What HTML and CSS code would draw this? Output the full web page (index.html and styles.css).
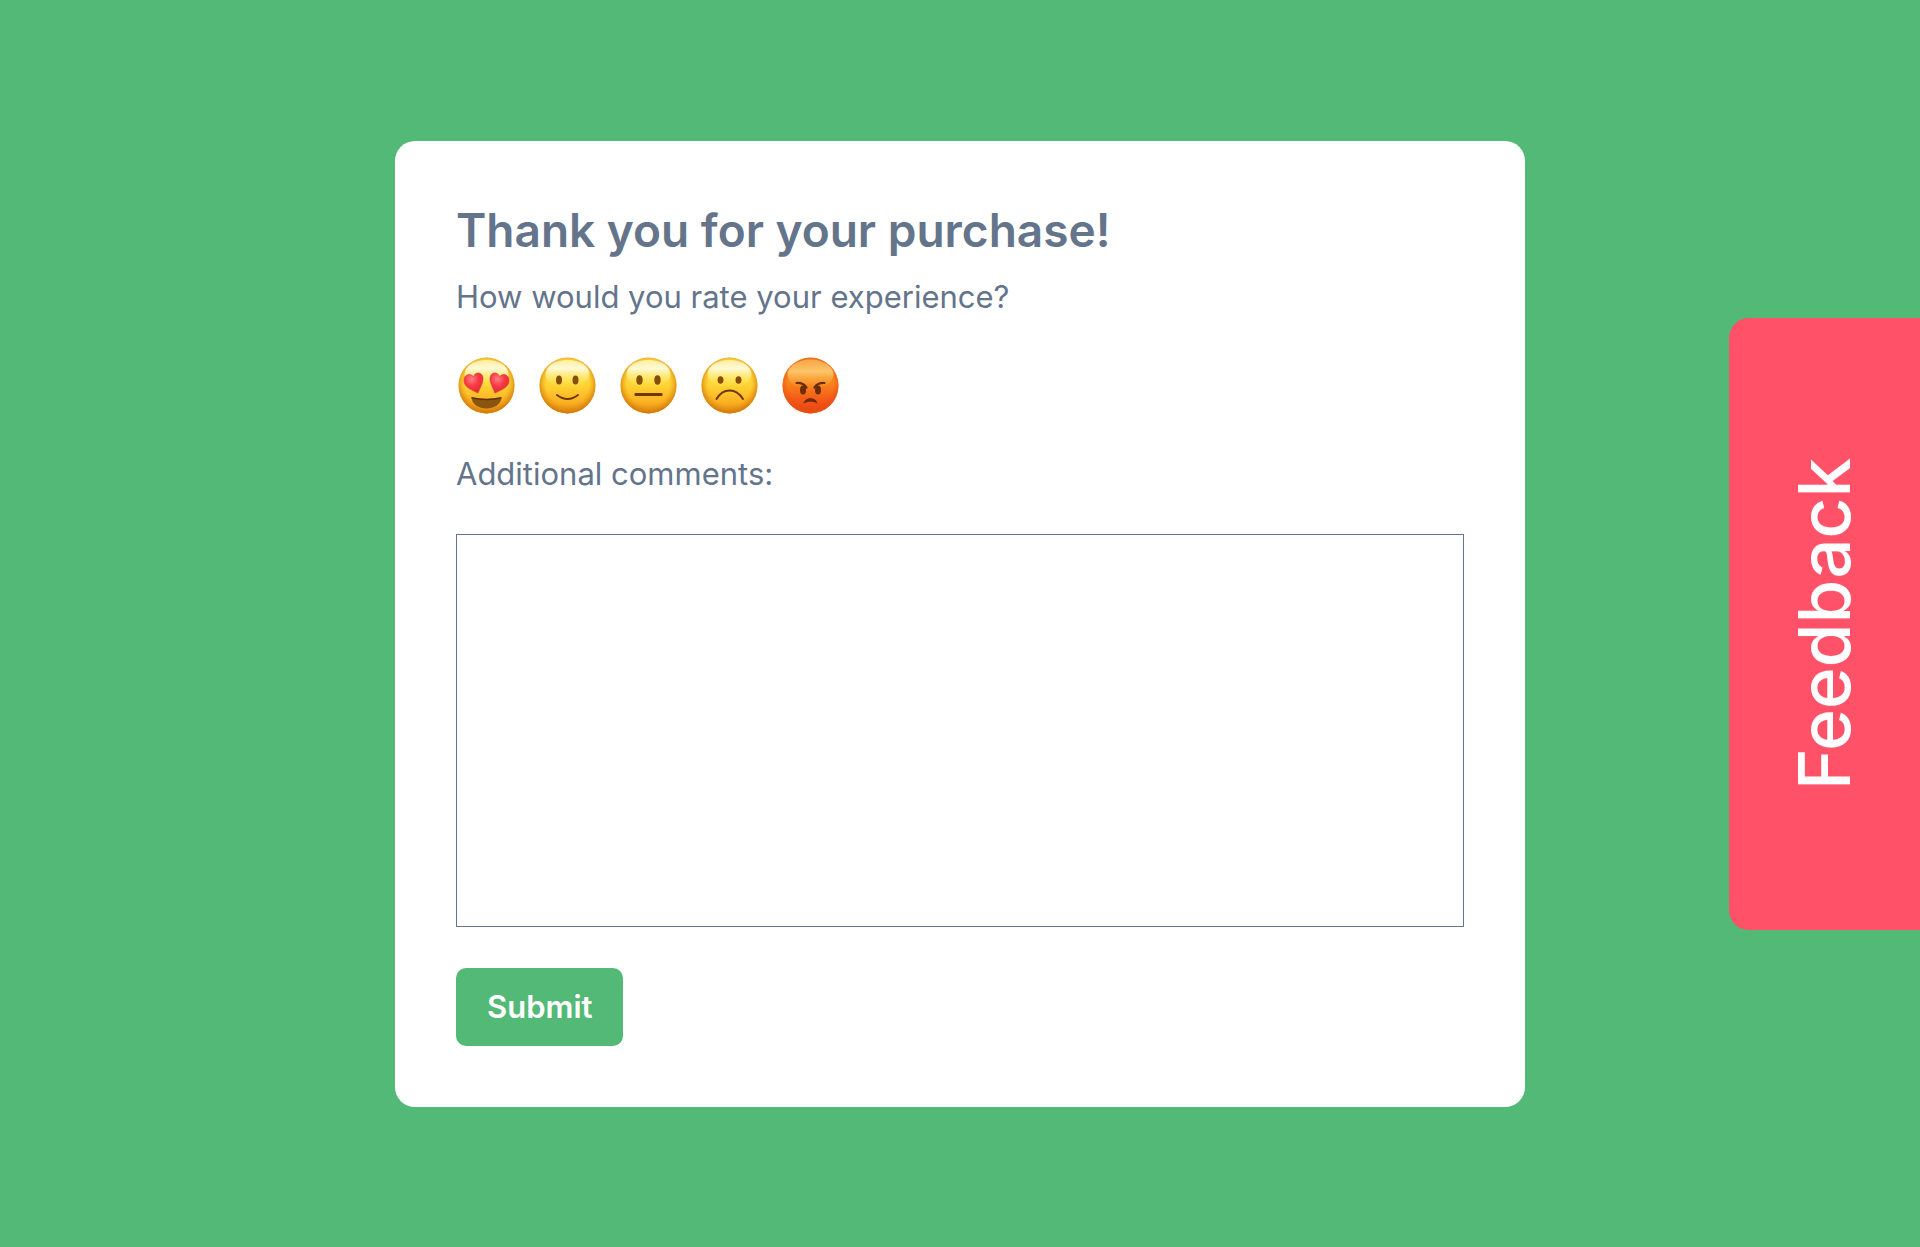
FILE: index.html
```html
<!DOCTYPE html>
<html lang="en">
<head>
<meta charset="UTF-8">
<meta name="viewport" content="width=device-width, initial-scale=1.0">
<title>Feedback</title>
<link rel="stylesheet" href="styles.css">
</head>
<body>

<!-- shared face gradients -->
<svg class="defs" width="0" height="0" aria-hidden="true">
  <defs>
    <linearGradient id="face" x1="0" y1="0" x2="0" y2="1">
      <stop offset="0" stop-color="#ffe04d"/>
      <stop offset="0.5" stop-color="#ffd334"/>
      <stop offset="0.8" stop-color="#fbb023"/>
      <stop offset="1" stop-color="#e08a10"/>
    </linearGradient>
    <radialGradient id="edge" cx="0.5" cy="0.46" r="0.54">
      <stop offset="0.7" stop-color="#ef9a15" stop-opacity="0"/>
      <stop offset="1" stop-color="#cf7808" stop-opacity="1"/>
    </radialGradient>
    <linearGradient id="shine" x1="0" y1="0" x2="0" y2="1">
      <stop offset="0" stop-color="#fff9c4" stop-opacity="0.7"/>
      <stop offset="0.3" stop-color="#fffbe0" stop-opacity="0.95"/>
      <stop offset="1" stop-color="#fff04a" stop-opacity="0"/>
    </linearGradient>
    <linearGradient id="angry" x1="0" y1="0" x2="0" y2="1">
      <stop offset="0" stop-color="#ee8020"/>
      <stop offset="0.45" stop-color="#f9861c"/>
      <stop offset="0.75" stop-color="#f45a18"/>
      <stop offset="1" stop-color="#ea3f12"/>
    </linearGradient>
    <radialGradient id="angryEdge" cx="0.5" cy="0.46" r="0.54">
      <stop offset="0.75" stop-color="#e8480f" stop-opacity="0"/>
      <stop offset="1" stop-color="#e8580f" stop-opacity="0.8"/>
    </radialGradient>
    <linearGradient id="angryShine" x1="0" y1="0" x2="0" y2="1">
      <stop offset="0" stop-color="#f9b050" stop-opacity="0.8"/>
      <stop offset="0.4" stop-color="#fdc56a"/>
      <stop offset="1" stop-color="#f7a82c" stop-opacity="0"/>
    </linearGradient>
    <radialGradient id="heart" cx="0.4" cy="0.3" r="0.8">
      <stop offset="0" stop-color="#ff7f84"/>
      <stop offset="0.45" stop-color="#f83a45"/>
      <stop offset="1" stop-color="#dd2533"/>
    </radialGradient>
  </defs>
</svg>

<main class="page">
  <form class="card">
    <h1>Thank you for your purchase!</h1>

    <fieldset class="rating">
      <legend>How would you rate your experience?</legend>
      <div class="faces">
        <label class="face">
          <input type="radio" name="rating" value="5" aria-label="Love it">
          <svg viewBox="0 0 57 57" aria-hidden="true">
            <circle cx="28.5" cy="28.5" r="28" fill="url(#face)"/>
            <circle cx="28.5" cy="28.5" r="28" fill="url(#edge)"/>
            <ellipse cx="28.5" cy="17" rx="22" ry="14" fill="url(#shine)"/>
            <path d="M13.5 40.500 Q28.500 43.500 43.500 40.500 C43 47.500 36 51.500 28.500 51.500 C21 51.500 14 47.500 13.500 40.500Z" fill="#8a5510"/>
            <path d="M13.500 40.800 Q28.500 44 43.500 40.800" fill="none" stroke="#5f3205" stroke-width="1.500"/>
            <path d="M20 36 C13 32.500 6 30 6 23.500 C6 17.500 12.500 15.500 15.500 19.800 C16.500 14.500 24.500 14.500 25 21 C25.300 26 22 30.500 20 36Z" fill="url(#heart)" stroke="#d9303a" stroke-width="0.600"/>
            <path d="M37 36 C44 32.500 51 30 51 23.500 C51 17.500 44.500 15.500 41.500 19.800 C40.500 14.500 32.500 14.500 32 21 C31.700 26 35 30.500 37 36Z" fill="url(#heart)" stroke="#d9303a" stroke-width="0.600"/>
          </svg>
        </label>
        <label class="face">
          <input type="radio" name="rating" value="4" aria-label="Good">
          <svg viewBox="0 0 57 57" aria-hidden="true">
            <circle cx="28.5" cy="28.5" r="28" fill="url(#face)"/>
            <circle cx="28.5" cy="28.5" r="28" fill="url(#edge)"/>
            <ellipse cx="28.5" cy="17" rx="22" ry="14" fill="url(#shine)"/>
            <ellipse cx="20" cy="23" rx="3" ry="4.500" fill="#854f0b"/>
            <ellipse cx="36.500" cy="23" rx="3" ry="4.500" fill="#854f0b"/>
            <path d="M18 38 Q28.500 46 39 38" fill="none" stroke="#6b3a06" stroke-width="2" stroke-linecap="round"/>
          </svg>
        </label>
        <label class="face">
          <input type="radio" name="rating" value="3" aria-label="Okay">
          <svg viewBox="0 0 57 57" aria-hidden="true">
            <circle cx="28.5" cy="28.5" r="28" fill="url(#face)"/>
            <circle cx="28.5" cy="28.5" r="28" fill="url(#edge)"/>
            <ellipse cx="28.5" cy="17" rx="22" ry="14" fill="url(#shine)"/>
            <ellipse cx="19.500" cy="23" rx="3.200" ry="4.800" fill="#854f0b"/>
            <ellipse cx="37.500" cy="23" rx="3.200" ry="4.800" fill="#854f0b"/>
            <rect x="14.500" y="36" width="28" height="3" rx="1" fill="#6b3a06"/>
          </svg>
        </label>
        <label class="face">
          <input type="radio" name="rating" value="2" aria-label="Bad">
          <svg viewBox="0 0 57 57" aria-hidden="true">
            <circle cx="28.5" cy="28.5" r="28" fill="url(#face)"/>
            <circle cx="28.5" cy="28.5" r="28" fill="url(#edge)"/>
            <ellipse cx="28.5" cy="17" rx="22" ry="14" fill="url(#shine)"/>
            <ellipse cx="19.500" cy="23" rx="3" ry="3.800" fill="#854f0b"/>
            <ellipse cx="37.500" cy="23" rx="3" ry="3.800" fill="#854f0b"/>
            <path d="M15.500 42 C22 30.500 35 30.500 42 42" fill="none" stroke="#6b3a06" stroke-width="2" stroke-linecap="round"/>
          </svg>
        </label>
        <label class="face">
          <input type="radio" name="rating" value="1" aria-label="Terrible">
          <svg viewBox="0 0 57 57" aria-hidden="true">
            <circle cx="28.5" cy="28.5" r="28" fill="url(#angry)"/>
            <circle cx="28.5" cy="28.5" r="28" fill="url(#angryEdge)"/>
            <ellipse cx="28.5" cy="17.500" rx="23" ry="15" fill="url(#angryShine)"/>
            <ellipse cx="21" cy="33" rx="3" ry="4.500" fill="#6b2c06"/>
            <ellipse cx="36" cy="33" rx="3" ry="4.500" fill="#6b2c06"/>
            <path d="M14.500 26 Q21 25.500 24.500 30.500 M42.500 26 Q36 25.500 32.500 30.500" fill="none" stroke="#6b2c06" stroke-width="2.200" stroke-linecap="round"/>
            <path d="M21.500 46.500 C23 39.500 34 39.500 35.500 46.500 C31 44 26 44 21.500 46.500Z" fill="#6b2c06"/>
          </svg>
        </label>
      </div>
    </fieldset>

    <label class="comments-label" for="comments">Additional comments:</label>
    <textarea id="comments" name="comments"></textarea>

    <button type="submit" class="submit">Submit</button>
  </form>
</main>

<button type="button" class="feedback-tab">Feedback</button>

</body>
</html>
```
FILE: styles.css
```css
* {
  box-sizing: border-box;
}

body {
  margin: 0;
  background-color: #52ba76;
  color: #64748b;
  font-family: Inter, "Liberation Sans", sans-serif;
  font-size: 31px;
  line-height: 38px;
}

button,
textarea {
  font: inherit;
}

.defs {
  position: absolute;
}

.page {
  display: flex;
  align-items: center;
  justify-content: center;
  min-height: 100vh;
}

.card {
  display: flex;
  flex-direction: column;
  align-items: flex-start;
  width: 100%;
  max-width: 1130px;
  padding: 61px;
  background-color: white;
  border-radius: 20px;
}

h1 {
  margin: 0 0 20px;
  font-size: 46px;
  font-weight: 600;
  line-height: 56px;
}

/* rating faces */
.rating {
  margin: 0 0 41px;
  padding: 0;
  border: none;
}

.rating legend {
  margin-bottom: 41px;
  padding: 0;
}

.faces {
  display: flex;
  gap: 24px;
  padding-left: 2px;
}

.face {
  position: relative;
  display: block;
  width: 57px;
  height: 57px;
  cursor: pointer;
}

.face input {
  position: absolute;
  inset: 0;
  width: 100%;
  height: 100%;
  margin: 0;
  opacity: 0;
  cursor: pointer;
}

.face svg {
  display: block;
  width: 100%;
  height: 100%;
}

.comments-label {
  margin-bottom: 41px;
}

textarea {
  display: block;
  width: 100%;
  height: 393px;
  margin-bottom: 41px;
  padding: 16px;
  border: 1px solid #64748b;
  border-radius: 0;
  color: inherit;
  resize: none;
}

.submit {
  padding: 20px 31px;
  border: none;
  border-radius: 10px;
  background-color: #52ba76;
  color: white;
  font-weight: 600;
  cursor: pointer;
}

/* tab on the right edge, reads bottom to top */
.feedback-tab {
  position: fixed;
  top: 50%;
  right: 0;
  padding: 140px 52px;
  border: none;
  border-radius: 0 20px 20px 0;
  background-color: #ff5269;
  color: white;
  font-size: 71px;
  font-weight: 500;
  line-height: 87px;
  writing-mode: vertical-rl;
  transform: translateY(-50%) rotate(180deg);
  cursor: pointer;
}
```
